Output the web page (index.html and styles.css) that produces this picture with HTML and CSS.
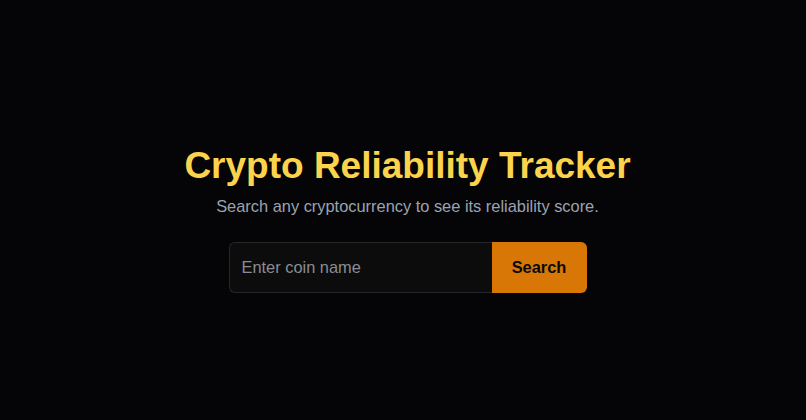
FILE: index.html
```html
<!DOCTYPE html>
<html lang="en">
<head>
<meta charset="utf-8">
<title>Crypto Reliability Tracker</title>
<link rel="stylesheet" href="styles.css">
</head>
<body>
<main class="page">
  <h1 class="title">Crypto Reliability Tracker</h1>
  <p class="subtitle">Search any cryptocurrency to see its reliability score.</p>
  <form class="search">
    <input class="search-input" type="text" placeholder="Enter coin name">
    <button class="search-btn" type="button">Search</button>
  </form>
</main>
</body>
</html>
```
FILE: styles.css
```css
html, body {
  margin: 0;
  padding: 0;
  background: #050507;
  height: 100%;
}
body {
  font-family: "Liberation Sans", Arial, sans-serif;
}
.page {
  display: flex;
  flex-direction: column;
  align-items: center;
  padding: 146px 0 0 9px;
}
.title {
  margin: 0 0 8px;
  font-size: 37px;
  line-height: 40px;
  font-weight: 700;
  color: #fcd34d;
}
.subtitle {
  margin: 0 0 24px;
  font-size: 16.4px;
  line-height: 24px;
  color: #9ca3af;
}
.search {
  display: flex;
  margin: 0;
}
.search-input {
  width: 263px;
  height: 51px;
  box-sizing: border-box;
  padding: 0 12px;
  font-family: inherit;
  font-size: 16.4px;
  color: #e5e7eb;
  background: #0c0c0d;
  border: 1px solid #26272b;
  border-right: none;
  border-radius: 6px 0 0 6px;
  outline: none;
}
.search-input::placeholder {
  color: #8a8d93;
}
.search-btn {
  width: 95px;
  height: 51px;
  padding: 0 20px;
  font-family: inherit;
  font-size: 16.4px;
  font-weight: 700;
  color: #0a0a0a;
  background: #d97706;
  border: none;
  border-radius: 0 6px 6px 0;
  cursor: pointer;
}
```
